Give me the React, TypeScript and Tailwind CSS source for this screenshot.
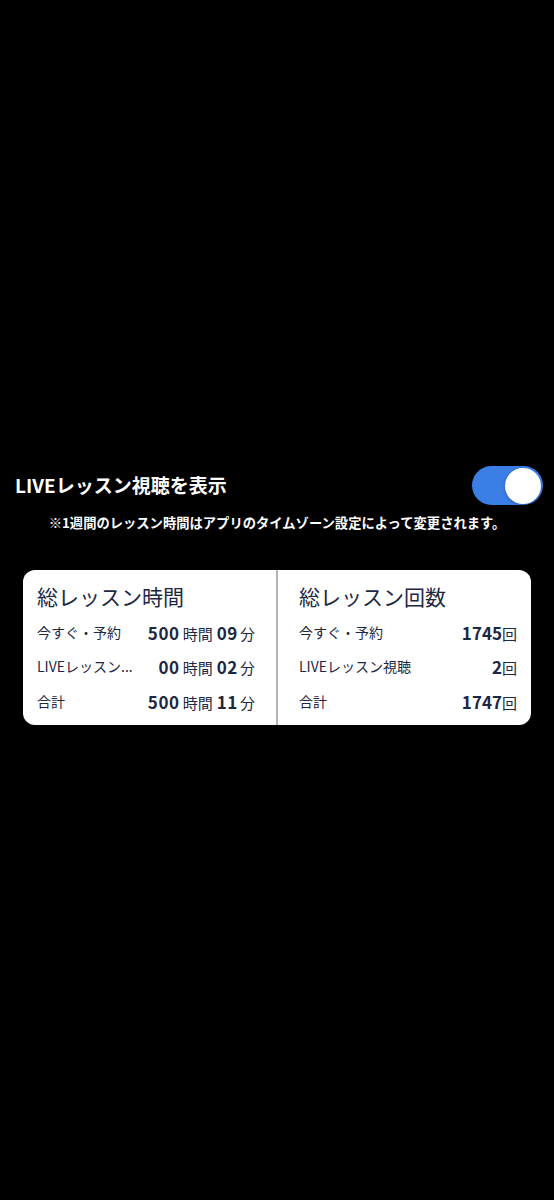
import React from "react";

const font = { fontFamily: '"Noto Sans CJK JP", "Noto Sans", sans-serif' };

function TimeValue({ h, m }: { h: string; m: string }) {
  return (
    <span className="flex items-baseline whitespace-nowrap text-[#1c2743]">
      <span className="text-[17px] font-bold tracking-[0.6px]">{h}</span>
      <span className="ml-[3px] text-[15px]">時間</span>
      <span className="ml-[4px] text-[17px] font-bold tracking-[0.6px]">{m}</span>
      <span className="ml-[2px] text-[15px]">分</span>
    </span>
  );
}

function CountValue({ n }: { n: string }) {
  return (
    <span className="flex items-baseline whitespace-nowrap text-[#1c2743]">
      <span className="text-[17px] font-bold">{n}</span>
      <span className="text-[15px]">回</span>
    </span>
  );
}

function Row({ label, value }: { label: string; value: React.ReactNode }) {
  return (
    <div className="flex h-[34.5px] items-center justify-between gap-[16px]">
      <span className="min-w-0 whitespace-nowrap text-[14px] text-[#1c2743]">{label}</span>
      {value}
    </div>
  );
}

export default function App() {
  return (
    <div className="min-h-[1200px] w-full bg-black pt-[466px]" style={font}>
      <div className="flex h-[39px] items-center justify-between pl-[15px] pr-[11px]">
        <span className="text-[19px] font-bold text-white">LIVEレッスン視聴を表示</span>
        <div className="flex h-[39px] w-[71px] items-center justify-end rounded-full bg-[#3a7ee6] p-[2px]">
          <div className="h-[36px] w-[36px] rounded-full bg-white shadow-[0_1px_3px_rgba(0,0,0,0.3)]" />
        </div>
      </div>
      <p className="mt-[9px] text-center text-[13.3px] font-bold leading-[18px] text-white">
        ※1週間のレッスン時間はアプリのタイムゾーン設定によって変更されます。
      </p>
      <div className="mx-[23px] mt-[38px] flex h-[155px] rounded-[12px] bg-white px-[14px]">
        <div className="flex min-w-0 flex-1 flex-col pt-[12px]">
          <div className="h-[28px] text-[21px] leading-[28px] text-[#1c2743]">総レッスン時間</div>
          <div className="mt-[5px]">
            <Row label="今すぐ・予約" value={<TimeValue h="500" m="09" />} />
            <Row label="LIVEレッスン..." value={<TimeValue h="00" m="02" />} />
            <Row label="合計" value={<TimeValue h="500" m="11" />} />
          </div>
        </div>
        <div className="mx-[21px] w-[2px] bg-[#b4b4b4]" />
        <div className="flex min-w-0 flex-1 flex-col pt-[12px]">
          <div className="h-[28px] text-[21px] leading-[28px] text-[#1c2743]">総レッスン回数</div>
          <div className="mt-[5px]">
            <Row label="今すぐ・予約" value={<CountValue n="1745" />} />
            <Row label="LIVEレッスン視聴" value={<CountValue n="2" />} />
            <Row label="合計" value={<CountValue n="1747" />} />
          </div>
        </div>
      </div>
    </div>
  );
}
